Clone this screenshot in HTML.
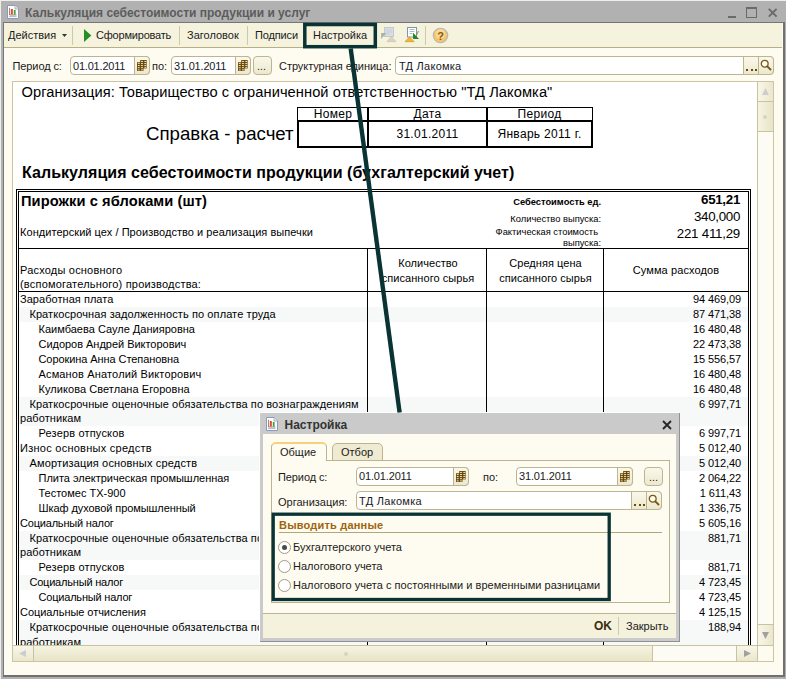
<!DOCTYPE html>
<html lang="ru"><head><meta charset="utf-8"><title>Калькуляция себестоимости продукции и услуг</title>
<style>
html,body{margin:0;padding:0}
body{width:786px;height:679px;position:relative;overflow:hidden;background:#b1b1b1;font:11px "Liberation Sans",sans-serif;color:#000}
div,span{position:absolute;box-sizing:border-box;white-space:nowrap}
.ui{font:11px "Liberation Sans",sans-serif;color:#1a1a1a;line-height:13px;transform:scaleY(1.07);transform-origin:0 60%}
.fld{background-color:#fff;border:1px solid #bdb58f;border-radius:4px}
.cal{width:15px;background:linear-gradient(#faf8ec,#ece8cf);border:1px solid #bdb58f;border-radius:0 4px 4px 0}
.bt{background:linear-gradient(#faf8ec,#ece8cf);border:1px solid #bdb58f}
.dot{width:2px;height:2px;background:#6b4a0a}
.sep{width:1px;background:#cfc9a9}
.ar{font-family:"Liberation Sans",sans-serif;color:#000}
.row{left:17px;width:732px}
.rt{font:11px "Liberation Sans",sans-serif;line-height:15px;top:0;letter-spacing:-.03px}
.rn{font:11px "Liberation Sans",sans-serif;line-height:15px;top:0;right:8px;letter-spacing:-.1px}
.st{text-align:center;font-size:12px;line-height:14px;letter-spacing:.3px}
.vl{width:1px;background:#000}
.hl{height:1px;background:#000}
.rad{width:13px;height:13px;border-radius:7px;background:#fff;border:1px solid #a29c82}
</style></head><body>
<!-- window frame -->
<div style="left:0;top:0;width:786px;height:1px;background:#eee"></div>
<div style="left:0;top:0;width:1px;height:679px;background:#eee"></div>
<div style="left:3px;top:22px;width:782px;height:655px;background:#fefbf0;border:1px solid #767676;border-right:2px solid #707070;border-bottom:2px solid #707070"></div>
<!-- title -->
<svg style="position:absolute;left:7px;top:5px" width="12" height="14" viewBox="0 0 12 14" preserveAspectRatio="none"><path d="M.500 .500h7.500l3.500 3.500v9.500h-11z" fill="#fff" stroke="#8c9ab8"/><path d="M8 .500v3.500h3.500" fill="#e4e9f2" stroke="#8c9ab8" stroke-width=".7"/><path d="M2.500 2.800v7.200h7" fill="none" stroke="#8a6a55" stroke-width=".8"/><rect x="3.800" y="4" width="2" height="5.600" fill="#e8432e"/><rect x="6.800" y="5" width="1.800" height="4.600" fill="#3aa535"/><path d="M2 11.600h7.600" stroke="#9db3d6" stroke-width=".9"/></svg>
<span style="left:25px;top:6px;font:bold 12px 'Liberation Sans',sans-serif;color:#5c5c5c;line-height:15px">Калькуляция себестоимости продукции и услуг</span>
<div style="left:728px;top:16px;width:8px;height:2px;background:#6a6a6a"></div>
<div style="left:746px;top:7px;width:11px;height:11px;border:1px solid #6a6a6a;border-top-width:2px"></div>
<svg style="position:absolute;left:767px;top:7px" width="11" height="11" viewBox="0 0 11 11"><path d="M1.800 1.800l7.800 7.800M9.600 1.800l-7.800 7.800" stroke="#6a6a6a" stroke-width="1.900"/></svg>
<!-- toolbar -->
<div style="left:4px;top:23px;width:778px;height:25px;background:#f5f2de;border-bottom:1px solid #b8af85"></div>
<span class="ui" style="left:8px;top:29px">Действия</span>
<svg style="position:absolute;left:62px;top:34px" width="5" height="3"><path d="M0 0h5l-2.500 3z" fill="#333"/></svg>
<div class="sep" style="left:72px;top:26px;height:19px"></div>
<svg style="position:absolute;left:84px;top:28.500px" width="8" height="13"><path d="M0 0l7.300 6.500l-7.300 6.500z" fill="#239023"/></svg>
<span class="ui" style="left:96px;top:29px;letter-spacing:-.2px">Сформировать</span>
<div class="sep" style="left:179px;top:26px;height:19px"></div>
<span class="ui" style="left:187px;top:29px">Заголовок</span>
<div class="sep" style="left:247px;top:26px;height:19px"></div>
<span class="ui" style="left:255px;top:29px;letter-spacing:-.15px">Подписи</span>
<span class="ui" style="left:313px;top:29px">Настройка</span>
<!-- toolbar icons -->
<svg style="position:absolute;left:380px;top:26px" width="17" height="18" viewBox="0 0 17 18"><rect x="4.500" y="1.500" width="9" height="9" fill="#d9dee5" stroke="#c3c9d1"/><path d="M6 4h6M6 6h6M6 8h4" stroke="#c3ccd6" stroke-width=".8"/><path d="M1.100 7.100h5.400l-5.400 5.800z" fill="#a9b4a2"/><path d="M6.800 15.700h9.200l-4.700-5.400z" fill="#d9d3ba" stroke="#c4bea2" stroke-width=".5"/></svg>
<svg style="position:absolute;left:404px;top:26px" width="17" height="18" viewBox="0 0 17 18"><rect x="3.500" y="1.500" width="9" height="9.500" fill="#fff" stroke="#7f97aa"/><path d="M5.500 3.500h5M5.500 5.500h5M5.500 7.500h3" stroke="#9fb4c6" stroke-width=".9"/><path d="M9 6.800v6.100h6z" fill="#1f8a1f"/><path d="M12.500 9l2-4" stroke="#8a6a3a" stroke-width=".8"/><path d="M1 15.700h9.200l-4.800-4.700z" fill="#f2b431" stroke="#d38f12" stroke-width=".6"/></svg>
<div class="sep" style="left:425px;top:26px;height:19px"></div>
<svg style="position:absolute;left:432px;top:27px" width="17" height="17" viewBox="0 0 17 17"><circle cx="8.5" cy="8.5" r="7.2" fill="#f6c56a" stroke="#b9b9b9" stroke-width="1.2"/><circle cx="8.5" cy="7" r="5" fill="#fbe0a6" opacity=".7"/><text x="8.5" y="12.5" text-anchor="middle" font-family="Liberation Sans,sans-serif" font-weight="bold" font-size="11" fill="#8a5a10">?</text></svg>
<!-- params row -->
<span class="ui" style="left:12.5px;top:60px;letter-spacing:-.1px">Период с:</span>
<div class="fld" style="left:70px;top:56px;width:80px;height:19px"></div><div class="cal" style="left:134px;top:56px;width:16px;height:19px"></div><svg style="position:absolute;left:137px;top:60px" width="10" height="11" viewBox="0 0 10 11"><path d="M3.200 0H9.700V8.500H6.500V10.900H0V2.200H3.200Z" fill="#6b4a08"/><g fill="#fbf3d4"><rect x="4.05" y="0.95" width="1.900" height=".900"/><rect x="7.30" y="0.95" width="1.900" height=".900"/><rect x="0.80" y="3.15" width="1.900" height=".900"/><rect x="4.05" y="3.15" width="1.900" height=".900"/><rect x="7.30" y="3.15" width="1.900" height=".900"/><rect x="0.80" y="5.15" width="1.900" height=".900"/><rect x="4.05" y="5.15" width="1.900" height=".900"/><rect x="7.30" y="5.15" width="1.900" height=".900"/><rect x="0.80" y="7.25" width="1.900" height=".900"/><rect x="4.05" y="7.25" width="1.900" height=".900"/><rect x="7.30" y="7.25" width="1.900" height=".900"/><rect x="0.80" y="9.45" width="1.900" height=".900"/><rect x="4.05" y="9.45" width="1.900" height=".900"/></g></svg>
<span class="ui" style="left:73px;top:60px;letter-spacing:-.2px">01.01.2011</span>
<span class="ui" style="left:152px;top:60px">по:</span>
<div class="fld" style="left:171px;top:56px;width:80px;height:19px"></div><div class="cal" style="left:235px;top:56px;width:16px;height:19px"></div><svg style="position:absolute;left:238px;top:60px" width="10" height="11" viewBox="0 0 10 11"><path d="M3.200 0H9.700V8.500H6.500V10.900H0V2.200H3.200Z" fill="#6b4a08"/><g fill="#fbf3d4"><rect x="4.05" y="0.95" width="1.900" height=".900"/><rect x="7.30" y="0.95" width="1.900" height=".900"/><rect x="0.80" y="3.15" width="1.900" height=".900"/><rect x="4.05" y="3.15" width="1.900" height=".900"/><rect x="7.30" y="3.15" width="1.900" height=".900"/><rect x="0.80" y="5.15" width="1.900" height=".900"/><rect x="4.05" y="5.15" width="1.900" height=".900"/><rect x="7.30" y="5.15" width="1.900" height=".900"/><rect x="0.80" y="7.25" width="1.900" height=".900"/><rect x="4.05" y="7.25" width="1.900" height=".900"/><rect x="7.30" y="7.25" width="1.900" height=".900"/><rect x="0.80" y="9.45" width="1.900" height=".900"/><rect x="4.05" y="9.45" width="1.900" height=".900"/></g></svg>
<span class="ui" style="left:174px;top:60px;letter-spacing:-.2px">31.01.2011</span>
<div class="fld bt" style="left:253px;top:56px;width:19px;height:19px"></div>
<span class="ui" style="left:257px;top:60px">...</span>
<span class="ui" style="left:279px;top:60px;letter-spacing:-.05px">Структурная единица:</span>
<div class="fld" style="left:395px;top:56px;width:379px;height:19px"></div><div class="bt" style="left:743px;top:56px;width:16px;height:19px"></div><div class="bt" style="left:758px;top:56px;width:16px;height:19px;border-radius:0 4px 4px 0"></div><div class="dot" style="left:746.3px;top:69px"></div><div class="dot" style="left:750.6px;top:69px"></div><div class="dot" style="left:754.9px;top:69px"></div><svg style="position:absolute;left:760px;top:59px" width="12" height="13" viewBox="0 0 12 13"><circle cx="4.700" cy="4.700" r="3.400" fill="#fffdf2" stroke="#7a5614" stroke-width="1.300"/><path d="M7.300 7.300l3.200 3.200" stroke="#7a5614" stroke-width="1.900" stroke-linecap="round"/></svg>
<span class="ui" style="left:399px;top:60px;letter-spacing:.25px">ТД Лакомка</span>
<!-- spreadsheet -->
<div style="left:12px;top:81px;width:762px;height:581px;background:#fff;border:1px solid #cbc5a6"></div>
<span class="ar" style="left:21.5px;top:83px;font-size:14.67px;line-height:18px;letter-spacing:.07px">Организация: Товарищество с ограниченной ответственностью "ТД Лакомка"</span>
<span class="ar" style="left:146px;top:123px;font-size:18.67px;line-height:22px">Справка - расчет</span>
<span class="ar" style="left:22px;top:163px;font-weight:bold;font-size:16px;line-height:19px;letter-spacing:.05px">Калькуляция себестоимости продукции (бухгалтерский учет)</span>
<!-- small table -->
<div style="left:297px;top:107px;width:296px;height:14px;border:1px solid #000;border-bottom:0"></div>
<div style="left:297px;top:120px;width:296px;height:28px;border:2px solid #000"></div>
<div class="vl" style="left:367px;top:107px;height:40px;width:2px"></div>
<div class="vl" style="left:486px;top:107px;height:40px;width:2px"></div>
<span class="ar st" style="left:299px;top:107px;width:68px">Номер</span>
<span class="ar st" style="left:369px;top:107px;width:117px">Дата</span>
<span class="ar st" style="left:488px;top:107px;width:103px">Период</span>
<span class="ar st" style="left:369px;top:127px;width:117px">31.01.2011</span>
<span class="ar st" style="left:488px;top:127px;width:103px">Январь 2011 г.</span>
<!-- main table -->
<span class="ar" style="left:21px;top:192px;font-weight:bold;font-size:14.67px;line-height:18px;letter-spacing:.08px">Пирожки с яблоками (шт)</span>
<span class="ar" style="left:20px;top:226px;font-size:11px;line-height:13px;letter-spacing:.05px">Кондитерский цех / Производство и реализация выпечки</span>
<span class="ar" style="right:185px;top:196px;font-weight:bold;font-size:9.33px;line-height:12px">Себестоимость ед.</span>
<span class="ar" style="right:185px;top:213px;font-size:9.33px;line-height:12px">Количество выпуска:</span>
<span class="ar" style="right:188px;top:226px;font-size:9.33px;line-height:12px">Фактическая стоимость</span>
<span class="ar" style="right:185px;top:237px;font-size:9.33px;line-height:12px">выпуска:</span>
<span class="ar" style="right:46px;top:192px;font-weight:bold;font-size:13.33px;line-height:16px;letter-spacing:-.3px">651,21</span>
<span class="ar" style="right:46px;top:209px;font-size:13.33px;line-height:16px;letter-spacing:-.3px">340,000</span>
<span class="ar" style="right:46px;top:226px;font-size:13.33px;line-height:16px;letter-spacing:-.25px">221 411,29</span>
<span class="ar" style="left:20px;top:263px;font-size:11px;line-height:14px;letter-spacing:.2px">Расходы основного</span>
<span class="ar" style="left:20px;top:277px;font-size:11px;line-height:14px;letter-spacing:.2px">(вспомогательного) производства:</span>
<span class="ar" style="left:369px;top:256px;width:118px;text-align:center;font-size:11px;line-height:14.5px;white-space:normal;letter-spacing:.05px">Количество списанного сырья</span>
<span class="ar" style="left:487px;top:256px;width:117px;text-align:center;font-size:11px;line-height:14.5px;white-space:normal;letter-spacing:.05px">Средняя цена списанного сырья</span>
<span class="ar" style="left:604px;top:263px;width:144px;text-align:center;font-size:11px;line-height:14.5px;letter-spacing:.12px">Сумма расходов</span>
<div class="row" style="top:292.25px;height:14.90px;">
<span class="rt" style="left:3.0px;letter-spacing:0.044px">Заработная плата</span>
<span class="rn">94 469,09</span></div>
<div class="row" style="top:307.15px;height:14.90px;background:#f7f9f9;">
<span class="rt" style="left:12.4px;letter-spacing:0.096px">Краткосрочная задолженность по оплате труда</span>
<span class="rn">87 471,38</span></div>
<div class="row" style="top:322.05px;height:14.90px;">
<span class="rt" style="left:21.5px;letter-spacing:0.011px">Каимбаева Сауле Данияровна</span>
<span class="rn">16 480,48</span></div>
<div class="row" style="top:336.95px;height:14.90px;">
<span class="rt" style="left:21.5px;letter-spacing:-0.026px">Сидоров Андрей Викторович</span>
<span class="rn">22 473,38</span></div>
<div class="row" style="top:351.85px;height:14.90px;">
<span class="rt" style="left:21.5px;letter-spacing:-0.077px">Сорокина Анна Степановна</span>
<span class="rn">15 556,57</span></div>
<div class="row" style="top:366.75px;height:14.90px;">
<span class="rt" style="left:21.5px;letter-spacing:0.150px">Асманов Анатолий Викторович</span>
<span class="rn">16 480,48</span></div>
<div class="row" style="top:381.65px;height:14.90px;">
<span class="rt" style="left:21.5px;letter-spacing:0.059px">Куликова Светлана Егоровна</span>
<span class="rn">16 480,48</span></div>
<div class="row" style="top:396.55px;height:29.80px;background:#f7f9f9;">
<span class="rt" style="left:12.4px;letter-spacing:0.106px">Краткосрочные оценочные обязательства по вознаграждениям</span>
<span class="rt" style="left:3px;top:14.5px;letter-spacing:0.069px">работникам</span>
<span class="rn">6 997,71</span></div>
<div class="row" style="top:426.35px;height:14.90px;">
<span class="rt" style="left:21.5px;letter-spacing:0.171px">Резерв отпусков</span>
<span class="rn">6 997,71</span></div>
<div class="row" style="top:441.25px;height:14.90px;">
<span class="rt" style="left:3.0px;letter-spacing:0.260px">Износ основных средств</span>
<span class="rn">5 012,40</span></div>
<div class="row" style="top:456.15px;height:14.90px;background:#f7f9f9;">
<span class="rt" style="left:12.4px;letter-spacing:0.168px">Амортизация основных средств</span>
<span class="rn">5 012,40</span></div>
<div class="row" style="top:471.05px;height:14.90px;">
<span class="rt" style="left:21.5px;letter-spacing:-0.021px">Плита электрическая промышленная</span>
<span class="rn">2 064,22</span></div>
<div class="row" style="top:485.95px;height:14.90px;">
<span class="rt" style="left:21.5px;letter-spacing:-0.004px">Тестомес ТХ-900</span>
<span class="rn">1 611,43</span></div>
<div class="row" style="top:500.85px;height:14.90px;">
<span class="rt" style="left:21.5px;letter-spacing:-0.078px">Шкаф духовой промышленный</span>
<span class="rn">1 336,75</span></div>
<div class="row" style="top:515.75px;height:14.90px;">
<span class="rt" style="left:3.0px;letter-spacing:-0.196px">Социальный налог</span>
<span class="rn">5 605,16</span></div>
<div class="row" style="top:530.65px;height:29.80px;background:#f7f9f9;">
<span class="rt" style="left:12.4px;letter-spacing:0.106px">Краткосрочные оценочные обязательства по вознаграждениям</span>
<span class="rt" style="left:3px;top:14.5px;letter-spacing:0.069px">работникам</span>
<span class="rn">881,71</span></div>
<div class="row" style="top:560.45px;height:14.90px;">
<span class="rt" style="left:21.5px;letter-spacing:0.171px">Резерв отпусков</span>
<span class="rn">881,71</span></div>
<div class="row" style="top:575.35px;height:14.90px;background:#f7f9f9;">
<span class="rt" style="left:12.4px;letter-spacing:-0.196px">Социальный налог</span>
<span class="rn">4 723,45</span></div>
<div class="row" style="top:590.25px;height:14.90px;">
<span class="rt" style="left:21.5px;letter-spacing:-0.196px">Социальный налог</span>
<span class="rn">4 723,45</span></div>
<div class="row" style="top:605.15px;height:14.90px;">
<span class="rt" style="left:3.0px;letter-spacing:-0.054px">Социальные отчисления</span>
<span class="rn">4 125,15</span></div>
<div class="row" style="top:620.05px;height:29.80px;background:#f7f9f9;">
<span class="rt" style="left:12.4px;letter-spacing:0.106px">Краткосрочные оценочные обязательства по вознаграждениям</span>
<span class="rt" style="left:3px;top:14.5px;letter-spacing:0.069px">работникам</span>
<span class="rn">188,94</span></div>
<!-- table lines -->
<div class="vl" style="left:16px;top:189px;height:457px"></div>
<div class="vl" style="left:18px;top:191px;height:455px"></div>
<div class="vl" style="left:748px;top:191px;height:455px"></div>
<div class="vl" style="left:750px;top:189px;height:457px"></div>
<div class="hl" style="left:16px;top:189px;width:735px"></div>
<div class="hl" style="left:18px;top:191px;width:731px"></div>
<div class="hl" style="left:18px;top:247.7px;width:731px;height:1.4px"></div>
<div class="hl" style="left:18px;top:290.6px;width:731px;height:1.4px"></div>
<div class="vl" style="left:367.3px;top:249px;height:397px"></div>
<div class="vl" style="left:486.3px;top:249px;height:397px"></div>
<div class="vl" style="left:603.3px;top:249px;height:397px"></div>
<!-- scrollbars -->
<div style="left:757px;top:82px;width:16px;height:564px;background:#fdfcf4;border-left:1px solid #c9c29f"></div>
<div style="left:757px;top:82px;width:16px;height:20px;background:linear-gradient(90deg,#f8f6e8,#ebe7cd);border:1px solid #c9c29f;border-top:0;border-right:0"></div>
<svg style="position:absolute;left:762px;top:88px" width="7" height="7"><path d="M3.500 0l3.500 7h-7z" fill="#cdcdcd"/></svg>
<div style="left:757px;top:101px;width:16px;height:31px;background:linear-gradient(90deg,#f6f3e0,#e8e4c8);border:1px solid #c9c29f;border-right:0"></div>
<div style="left:763px;top:115px;width:4px;height:4px;border-radius:2px;background:#d9d4bc"></div>
<div style="left:757px;top:624px;width:16px;height:22px;background:linear-gradient(90deg,#f8f6e8,#ebe7cd);border:1px solid #c9c29f;border-right:0"></div>
<svg style="position:absolute;left:762px;top:632px" width="7" height="7"><path d="M0 0h7l-3.500 7z" fill="#a0a0a0"/></svg>
<div style="left:13px;top:645px;width:760px;height:16px;background:#fdfcf4;border-top:1px solid #c9c29f"></div>
<div style="left:13px;top:645px;width:21px;height:16px;background:linear-gradient(#f8f6e8,#ebe7cd);border:1px solid #c9c29f;border-left:0;border-bottom:0"></div>
<svg style="position:absolute;left:19px;top:650px" width="7" height="7"><path d="M7 0v7l-7-3.500z" fill="#cdcdcd"/></svg>
<div style="left:34px;top:645px;width:619px;height:16px;background:linear-gradient(#f6f3e0,#e8e4c8);border:1px solid #c9c29f;border-bottom:0;border-left:0"></div>
<div style="left:344px;top:652px;width:4px;height:4px;border-radius:2px;background:#d9d4bc"></div>
<div style="left:736px;top:645px;width:22px;height:16px;background:linear-gradient(#f8f6e8,#ebe7cd);border:1px solid #c9c29f;border-bottom:0"></div>
<svg style="position:absolute;left:744px;top:650px" width="7" height="7"><path d="M0 0v7l7-3.500z" fill="#a0a0a0"/></svg>
<div style="left:758px;top:646px;width:15px;height:15px;background:#fefbf0"></div>
<!-- dialog -->
<div style="left:259px;top:412px;width:421px;height:230px;background:#fff"></div>
<div style="left:260px;top:413px;width:420px;height:229px;background:#cacaca;border-right:1px solid #909090;border-bottom:1px solid #909090"></div>
<div style="left:263px;top:434px;width:413px;height:204px;background:#fefbf0"></div>
<svg style="position:absolute;left:266px;top:417px" width="12" height="14" viewBox="0 0 12 14" preserveAspectRatio="none"><path d="M.500 .500h7.500l3.500 3.500v9.500h-11z" fill="#fff" stroke="#8c9ab8"/><path d="M8 .500v3.500h3.500" fill="#e4e9f2" stroke="#8c9ab8" stroke-width=".7"/><path d="M2.500 2.800v7.200h7" fill="none" stroke="#8a6a55" stroke-width=".8"/><rect x="3.800" y="4" width="2" height="5.600" fill="#e8432e"/><rect x="6.800" y="5" width="1.800" height="4.600" fill="#3aa535"/><path d="M2 11.600h7.600" stroke="#9db3d6" stroke-width=".9"/></svg>
<span style="left:284.500px;top:418px;font:bold 12px 'Liberation Sans',sans-serif;color:#333;line-height:15px">Настройка</span>
<svg style="position:absolute;left:662px;top:420px" width="10" height="10" viewBox="0 0 10 10"><path d="M1 1l8 8M9 1l-8 8" stroke="#262626" stroke-width="1.900"/></svg>
<!-- tabs -->
<div style="left:271px;top:460px;width:399px;height:143px;border:1px solid #bcb48e"></div>
<div style="left:332px;top:443px;width:51px;height:18px;background:#efebd3;border:1px solid #bcb48e;border-radius:5px 5px 0 0"></div>
<span class="ui" style="left:341px;top:446px">Отбор</span>
<div style="left:271px;top:442px;width:56px;height:19px;background:#fefbf0;border:1px solid #bcb48e;border-bottom:0;border-top:2px solid #f5d27a;border-radius:5px 5px 0 0"></div>
<span class="ui" style="left:280px;top:446px">Общие</span>
<!-- fields -->
<span class="ui" style="left:278px;top:471px;letter-spacing:-.1px">Период с:</span>
<div class="fld" style="left:356px;top:467px;width:113px;height:19px"></div><div class="cal" style="left:453px;top:467px;width:16px;height:19px"></div><svg style="position:absolute;left:456px;top:471px" width="10" height="11" viewBox="0 0 10 11"><path d="M3.200 0H9.700V8.500H6.500V10.900H0V2.200H3.200Z" fill="#6b4a08"/><g fill="#fbf3d4"><rect x="4.05" y="0.95" width="1.900" height=".900"/><rect x="7.30" y="0.95" width="1.900" height=".900"/><rect x="0.80" y="3.15" width="1.900" height=".900"/><rect x="4.05" y="3.15" width="1.900" height=".900"/><rect x="7.30" y="3.15" width="1.900" height=".900"/><rect x="0.80" y="5.15" width="1.900" height=".900"/><rect x="4.05" y="5.15" width="1.900" height=".900"/><rect x="7.30" y="5.15" width="1.900" height=".900"/><rect x="0.80" y="7.25" width="1.900" height=".900"/><rect x="4.05" y="7.25" width="1.900" height=".900"/><rect x="7.30" y="7.25" width="1.900" height=".900"/><rect x="0.80" y="9.45" width="1.900" height=".900"/><rect x="4.05" y="9.45" width="1.900" height=".900"/></g></svg>
<span class="ui" style="left:359px;top:470px;letter-spacing:-.15px">01.01.2011</span>
<span class="ui" style="left:483px;top:471px">по:</span>
<div class="fld" style="left:516px;top:467px;width:117px;height:19px"></div><div class="cal" style="left:617px;top:467px;width:16px;height:19px"></div><svg style="position:absolute;left:620px;top:471px" width="10" height="11" viewBox="0 0 10 11"><path d="M3.200 0H9.700V8.500H6.500V10.900H0V2.200H3.200Z" fill="#6b4a08"/><g fill="#fbf3d4"><rect x="4.05" y="0.95" width="1.900" height=".900"/><rect x="7.30" y="0.95" width="1.900" height=".900"/><rect x="0.80" y="3.15" width="1.900" height=".900"/><rect x="4.05" y="3.15" width="1.900" height=".900"/><rect x="7.30" y="3.15" width="1.900" height=".900"/><rect x="0.80" y="5.15" width="1.900" height=".900"/><rect x="4.05" y="5.15" width="1.900" height=".900"/><rect x="7.30" y="5.15" width="1.900" height=".900"/><rect x="0.80" y="7.25" width="1.900" height=".900"/><rect x="4.05" y="7.25" width="1.900" height=".900"/><rect x="7.30" y="7.25" width="1.900" height=".900"/><rect x="0.80" y="9.45" width="1.900" height=".900"/><rect x="4.05" y="9.45" width="1.900" height=".900"/></g></svg>
<span class="ui" style="left:519px;top:470px;letter-spacing:-.15px">31.01.2011</span>
<div class="fld bt" style="left:644px;top:467px;width:19px;height:19px"></div>
<span class="ui" style="left:649px;top:471px">...</span>
<span class="ui" style="left:278px;top:496px">Организация:</span>
<div class="fld" style="left:356px;top:491px;width:306px;height:19px"></div><div class="bt" style="left:631px;top:491px;width:16px;height:19px"></div><div class="bt" style="left:646px;top:491px;width:16px;height:19px;border-radius:0 4px 4px 0"></div><div class="dot" style="left:634.3px;top:504px"></div><div class="dot" style="left:638.6px;top:504px"></div><div class="dot" style="left:642.9px;top:504px"></div><svg style="position:absolute;left:648px;top:494px" width="12" height="13" viewBox="0 0 12 13"><circle cx="4.700" cy="4.700" r="3.400" fill="#fffdf2" stroke="#7a5614" stroke-width="1.300"/><path d="M7.300 7.300l3.200 3.200" stroke="#7a5614" stroke-width="1.900" stroke-linecap="round"/></svg>
<span class="ui" style="left:359px;top:495px;letter-spacing:.3px">ТД Лакомка</span>
<!-- group -->
<span style="left:279px;top:518px;font:bold 11px 'Liberation Sans',sans-serif;color:#a0640a;letter-spacing:.2px;line-height:14px">Выводить данные</span>
<div style="left:279px;top:532px;width:383px;height:1px;background:#aea67c"></div>
<div class="rad" style="left:278px;top:541px"></div><div style="left:282px;top:545px;width:5px;height:5px;border-radius:3px;background:#4a4a4a"></div>
<span class="ui" style="left:293px;top:541px">Бухгалтерского учета</span>
<div class="rad" style="left:278px;top:560px"></div>
<span class="ui" style="left:293px;top:560px">Налогового учета</span>
<div class="rad" style="left:278px;top:579px"></div>
<span class="ui" style="left:293px;top:579px;letter-spacing:.03px">Налогового учета с постоянными и временными разницами</span>
<!-- bottom bar -->
<div style="left:263px;top:613px;width:413px;height:25px;background:#f4f1dc;border-top:1px solid #bcb48e"></div>
<span style="left:594px;top:619px;font:bold 12px 'Liberation Sans',sans-serif;color:#3a2a10;line-height:14px">OK</span>
<div class="sep" style="left:618px;top:617px;height:18px"></div>
<span class="ui" style="left:626px;top:620px">Закрыть</span>

<!-- annotations -->
<svg style="position:absolute;left:0;top:0" width="786" height="679" viewBox="0 0 786 679"><g fill="none" stroke="#0a3333"><rect x="304.8" y="24.500" width="70.5" height="22.2" stroke-width="3.5"/><line x1="350.7" y1="48.5" x2="399.6" y2="412.5" stroke-width="4.4"/><rect x="273.2" y="514.2" width="336" height="85.3" stroke-width="3.3"/></g></svg>

</body></html>
